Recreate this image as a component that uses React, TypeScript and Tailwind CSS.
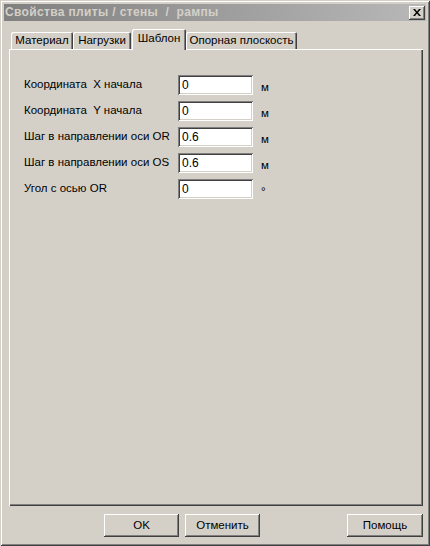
import React from "react";

const raised =
  "shadow-[inset_-1px_-1px_#404040,inset_1px_1px_#ffffff,inset_-2px_-2px_#808080,inset_2px_2px_#d4d0c8]";
const sunken =
  "shadow-[inset_1px_1px_#808080,inset_-1px_-1px_#ffffff,inset_2px_2px_#404040,inset_-2px_-2px_#d4d0c8]";

const rows: { label: string; value: string; unit: string }[] = [
  { label: "Координата  X начала", value: "0", unit: "м" },
  { label: "Координата  Y начала", value: "0", unit: "м" },
  { label: "Шаг в направлении оси OR", value: "0.6", unit: "м" },
  { label: "Шаг в направлении оси OS", value: "0.6", unit: "м" },
  { label: "Угол с осью OR", value: "0", unit: "°" },
];

function Tab({ label, w, active }: { label: string; w: string; active?: boolean }) {
  if (active) {
    return (
      <div
        className={`${w} h-[21px] mb-[-1px] relative z-10 bg-[#d4d0c8] rounded-t-[2px] shadow-[inset_1px_1px_#ffffff,inset_-1px_0_#404040,inset_-2px_0_#808080] flex items-start justify-center pt-[3px] text-black`}
      >
        {label}
      </div>
    );
  }
  return (
    <div
      className={`${w} h-[17px] bg-[#d4d0c8] rounded-t-[2px] shadow-[inset_1px_1px_#ffffff,inset_-1px_0_#404040,inset_-2px_0_#808080] flex items-start justify-center pt-[2px] text-black`}
    >
      {label}
    </div>
  );
}

function Button({ label, w, cls }: { label: string; w: string; cls?: string }) {
  return (
    <div
      className={`${w} h-[23px] ${raised} bg-[#d4d0c8] flex items-center justify-center text-black ${cls ?? ""}`}
    >
      {label}
    </div>
  );
}

export default function App() {
  return (
    <div
      className="w-[430px] h-[546px] bg-[#d4d0c8] p-[4px] flex flex-col shadow-[inset_1px_1px_#d4d0c8,inset_-1px_-1px_#404040,inset_2px_2px_#ffffff,inset_-2px_-2px_#808080] text-[11.5px] leading-[13px]"
      style={{ fontFamily: '"Liberation Sans", Arial, sans-serif' }}
    >
      {/* Title bar */}
      <div className="h-[17px] bg-[linear-gradient(to_right,#808080,#b8b8b8)] flex items-center pl-[1px] pr-[1px]">
        <span className="text-[#d4d0c8] font-bold text-[12px] tracking-[0.35px] leading-[15px] whitespace-pre flex-1">
          {"Свойства плиты / стены  /  рампы"}
        </span>
        <div className={`w-[16px] h-[14px] bg-[#d4d0c8] ${raised} flex items-center justify-center`}>
          <svg width="8" height="7" viewBox="0 0 8 7">
            <path d="M0 0h2l2 2.5L6 0h2L5 3.5 8 7H6L4 4.5 2 7H0l3-3.5z" fill="#000" />
          </svg>
        </div>
      </div>

      {/* Tabs */}
      <div className="mt-[8px] ml-[7px] h-[20px] flex items-end">
        <Tab label="Материал" w="w-[62px]" />
        <Tab label="Нагрузки" w="w-[58px]" />
        <div className="w-[1px]" />
        <Tab label="Шаблон" w="w-[54px]" active />
        <Tab label="Опорная плоскость" w="w-[111px]" />
      </div>

      {/* Panel */}
      <div className="ml-[5px] w-[414px] h-[457px] shadow-[inset_1px_1px_#ffffff,inset_-1px_-1px_#404040,inset_-2px_-2px_#808080] pt-[26px] pl-[15px]">
        <div className="flex flex-col gap-[6px]">
          {rows.map((r) => (
            <div key={r.label} className="flex items-center h-[20px]">
              <div className="w-[154px] whitespace-pre text-black -mt-[2px]">{r.label}</div>
              <div className={`w-[75px] h-[20px] bg-white ${sunken} pl-[4px] flex items-center text-black text-[12px]`}>
                {r.value}
              </div>
              <div className="ml-[8px] mt-[5px] text-black">{r.unit}</div>
            </div>
          ))}
        </div>
      </div>

      {/* Buttons */}
      <div className="ml-[5px] w-[414px] mt-[8px] flex">
        <Button label="OK" w="w-[75px]" cls="ml-[95px]" />
        <Button label="Отменить" w="w-[75px]" cls="ml-[6px]" />
        <Button label="Помощь" w="w-[76px]" cls="ml-auto" />
      </div>
    </div>
  );
}
